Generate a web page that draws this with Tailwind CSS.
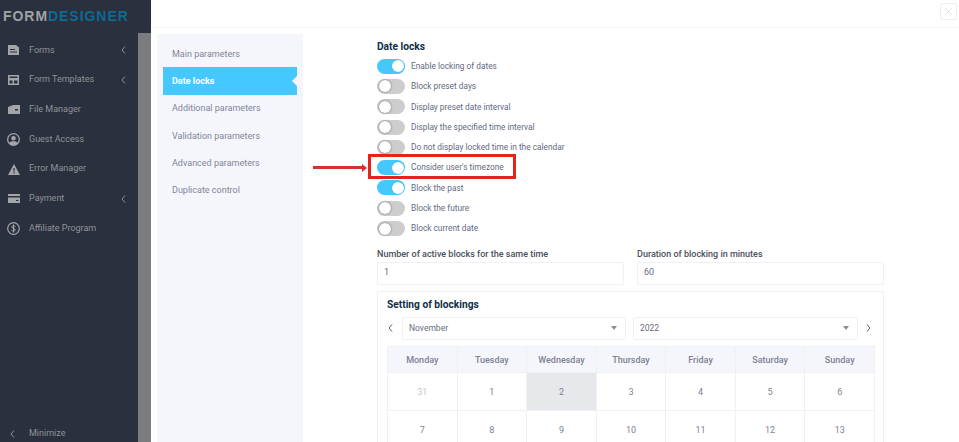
<!DOCTYPE html>
<html lang="en">
<head>
  <meta charset="UTF-8" />
  <title>Form Designer</title>
  <script src="https://cdn.jsdelivr.net/npm/@tailwindcss/browser@4"></script>
</head>
<body class="w-[959px] h-[442px] overflow-hidden bg-white font-['Roboto',sans-serif] text-[9px] flex">
  <!-- sidebar -->
  <aside class="w-[151px] h-[442px] shrink-0 flex flex-col bg-[#7b7c81]">
    <div class="h-[33px] bg-[#2a303d] pl-[3px] pt-[8px] font-['Liberation_Sans',sans-serif] font-bold text-[14px] leading-[16px] tracking-[0.950px]">
      <span class="text-[#a0a2a6]">FORM</span><span class="text-[#0c6a94]">DESIGNER</span>
    </div>
    <nav class="w-[138px] flex-1 bg-[#2a303d] text-[#90939a] flex flex-col">
      <div class="pt-[2.500px] flex-1 flex flex-col">
        <a class="h-[29.700px] flex items-center pl-[8px]">
          <svg class="w-[12px] h-[10px] mr-[9px]" viewBox="0 0 12 10" fill="#a3a5aa"><path d="M0 0h8l3 2.500V10H0zM2 4v1h5V4zM2 6.500v1h7v-1z" fill-rule="evenodd"/></svg>
          <span class="flex-1">Forms</span>
          <svg class="w-[5px] h-[8px] mr-[12px]" viewBox="0 0 5 8" fill="none" stroke="#90939a"><path d="M4 .5 1 4l3 3.500"/></svg>
        </a>
        <a class="h-[29.700px] flex items-center pl-[8px]">
          <svg class="w-[11px] h-[10px] mr-[10px]" viewBox="0 0 11 10" fill="#a3a5aa"><path d="M0 0h11v10H0zM1.500 3v5.500h3V5.500h-3V3zm0 0h8V1.500h-8zm4.500 2.500v3h3.500v-3z" fill-rule="evenodd"/></svg>
          <span class="flex-1">Form Templates</span>
          <svg class="w-[5px] h-[8px] mr-[12px]" viewBox="0 0 5 8" fill="none" stroke="#90939a"><path d="M4 .5 1 4l3 3.500"/></svg>
        </a>
        <a class="h-[29.700px] flex items-center pl-[8px]">
          <svg class="w-[12px] h-[9px] mr-[9px]" viewBox="0 0 12 9" fill="#a3a5aa"><path d="M0 2 5 0h7v9H0zM7 4v1.500h3V4z" fill-rule="evenodd"/></svg>
          <span>File Manager</span>
        </a>
        <a class="h-[29.700px] flex items-center pl-[7px]">
          <svg class="w-[13px] h-[13px] mr-[9px]" viewBox="0 0 13 13" fill="#a3a5aa"><path d="M6.500 0a6.500 6.500 0 1 0 0 13 6.500 6.500 0 0 0 0-13zm0 1.200a5.300 5.300 0 0 1 4.200 8.500C9.800 8.700 8.300 8.300 6.500 8.300s-3.300.4-4.200 1.400A5.300 5.300 0 0 1 6.500 1.200zm0 1.800a2.300 2.300 0 1 0 0 4.600 2.300 2.300 0 0 0 0-4.600z" fill-rule="evenodd"/></svg>
          <span>Guest Access</span>
        </a>
        <a class="h-[29.700px] flex items-center pl-[8px]">
          <svg class="w-[12px] h-[11px] mr-[9px]" viewBox="0 0 12 11" fill="#a3a5aa"><path d="M6 0l6 11H0zM5.400 4v3.500h1.200V4zm0 4.300v1.200h1.200V8.300z" fill-rule="evenodd"/></svg>
          <span>Error Manager</span>
        </a>
        <a class="h-[29.700px] flex items-center pl-[8px]">
          <svg class="w-[12px] h-[9px] mr-[9px]" viewBox="0 0 12 9" fill="#a3a5aa"><path d="M0 0h12v9H0zM0 2v1.500h12V2zM8 6v1h2.500V6z" fill-rule="evenodd"/></svg>
          <span class="flex-1">Payment</span>
          <svg class="w-[5px] h-[8px] mr-[12px]" viewBox="0 0 5 8" fill="none" stroke="#90939a"><path d="M4 .5 1 4l3 3.500"/></svg>
        </a>
        <a class="h-[29.700px] flex items-center pl-[7px]">
          <svg class="w-[13px] h-[13px] mr-[9px]" viewBox="0 0 13 13" fill="none" stroke="#a3a5aa"><circle cx="6.500" cy="6.500" r="5.800" stroke-width="1.200"/><path d="M8.500 4.600C8 3.700 5 3.400 4.700 5c-.2 1.700 3.800 1 3.600 3-.2 1.500-3.300 1.300-3.900.3M6.500 2.500v8"/></svg>
          <span>Affiliate Program</span>
        </a>
      </div>
      <div class="h-[17px] flex items-center pl-[10px]">
        <svg class="w-[5px] h-[8px] mr-[14px]" viewBox="0 0 5 8" fill="none" stroke="#90939a"><path d="M4 .5 1 4l3 3.500"/></svg>
        <span>Minimize</span>
      </div>
    </nav>
  </aside>

  <!-- modal -->
  <main class="flex-1 min-w-0 h-[442px] overflow-hidden flex flex-col bg-white">
    <header class="h-[28px] shrink-0 border-b border-[#f4f5f7] flex justify-end pt-[3px] pr-[2px]">
      <div class="w-[17px] h-[17px] rounded-[2px] border border-[#eceef1] flex items-center justify-center">
        <svg class="w-[9px] h-[9px]" viewBox="0 0 9 9" stroke="#e2e4e8"><path d="M1 1l7 7M8 1 1 8"/></svg>
      </div>
    </header>
    <div class="flex-1 flex pt-[6px] pl-[6px] min-h-0">
      <!-- tabs -->
      <div class="w-[146px] h-[408px] shrink-0 bg-[#f5f6fb] pt-[6px] pl-[6px] text-[#80859a] text-[9px]">
        <div class="h-[27px] pl-[9px] pt-[2px] flex items-center">Main parameters</div>
        <div class="relative w-[134px] h-[28px] pl-[9px] pt-[2px] flex items-center bg-[#45c8ff] text-white font-bold">
          Date locks
          <span class="absolute right-0 top-[9px] border-y-[5px] border-r-[5px] border-y-transparent border-r-[#f5f6fb]"></span>
        </div>
        <div class="h-[27.300px] pl-[9px] pt-[1px] flex items-center">Additional parameters</div>
        <div class="h-[27.300px] pl-[9px] pt-[1px] flex items-center">Validation parameters</div>
        <div class="h-[27.300px] pl-[9px] pt-[1px] flex items-center">Advanced parameters</div>
        <div class="h-[27.300px] pl-[9px] flex items-center">Duplicate control</div>
      </div>

      <!-- content -->
      <div class="w-[507px] ml-[74px] shrink-0">
        <h2 class="text-[#0e2f49] font-bold text-[10.200px] leading-[14px] mt-[6px] mb-[2px]">Date locks</h2>
        <div class="flex flex-col text-[#636a7f] text-[8.300px]">
          <label class="h-[20.300px] flex items-center gap-[6px]"><span class="w-[28px] h-[15px] rounded-full bg-[#45c8ff] flex justify-end items-center pr-[1.500px]"><span class="w-[12px] h-[12px] rounded-full bg-white shadow-[0_0_1px_#1d8fc4]"></span></span>Enable locking of dates</label>
          <label class="h-[20.300px] flex items-center gap-[6px]"><span class="w-[28px] h-[15px] rounded-full bg-[#cdcdcd] flex items-center pl-[1.500px]"><span class="w-[12px] h-[12px] rounded-full bg-white shadow-[0_0_2px_#555]"></span></span>Block preset days</label>
          <label class="h-[20.300px] flex items-center gap-[6px]"><span class="w-[28px] h-[15px] rounded-full bg-[#cdcdcd] flex items-center pl-[1.500px]"><span class="w-[12px] h-[12px] rounded-full bg-white shadow-[0_0_2px_#555]"></span></span>Display preset date interval</label>
          <label class="h-[20.300px] flex items-center gap-[6px]"><span class="w-[28px] h-[15px] rounded-full bg-[#cdcdcd] flex items-center pl-[1.500px]"><span class="w-[12px] h-[12px] rounded-full bg-white shadow-[0_0_2px_#555]"></span></span>Display the specified time interval</label>
          <label class="h-[20.300px] flex items-center gap-[6px]"><span class="w-[28px] h-[15px] rounded-full bg-[#cdcdcd] flex items-center pl-[1.500px]"><span class="w-[12px] h-[12px] rounded-full bg-white shadow-[0_0_2px_#555]"></span></span>Do not display locked time in the calendar</label>
          <label class="relative h-[20.300px] flex items-center gap-[6px]"><span class="w-[28px] h-[15px] rounded-full bg-[#45c8ff] flex justify-end items-center pr-[1.500px]"><span class="w-[12px] h-[12px] rounded-full bg-white shadow-[0_0_1px_#1d8fc4]"></span></span>Consider user's timezone
            <span class="absolute left-[-9px] top-[-3px] w-[148px] h-[25px] border-[3px] border-[#e3241c]"></span>
            <span class="absolute left-[-64px] top-[9px] w-[50px] h-[3px] bg-[#d8302a]"></span>
            <span class="absolute left-[-15px] top-[6.500px] border-y-[4px] border-l-[5px] border-y-transparent border-l-[#d8302a]"></span>
          </label>
          <label class="h-[20.300px] flex items-center gap-[6px]"><span class="w-[28px] h-[15px] rounded-full bg-[#45c8ff] flex justify-end items-center pr-[1.500px]"><span class="w-[12px] h-[12px] rounded-full bg-white shadow-[0_0_1px_#1d8fc4]"></span></span>Block the past</label>
          <label class="h-[20.300px] flex items-center gap-[6px]"><span class="w-[28px] h-[15px] rounded-full bg-[#cdcdcd] flex items-center pl-[1.500px]"><span class="w-[12px] h-[12px] rounded-full bg-white shadow-[0_0_2px_#555]"></span></span>Block the future</label>
          <label class="h-[20.300px] flex items-center gap-[6px]"><span class="w-[28px] h-[15px] rounded-full bg-[#cdcdcd] flex items-center pl-[1.500px]"><span class="w-[12px] h-[12px] rounded-full bg-white shadow-[0_0_2px_#555]"></span></span>Block current date</label>
        </div>

        <div class="grid grid-cols-[247px_247px] gap-x-[13px] mt-[8px] text-[#4a4f5c] text-[9px] font-medium">
          <div>
            <div class="h-[14px] leading-[14px] mb-[1px]">Number of active blocks for the same time</div>
            <div class="h-[23px] border border-[#f0f1f4] rounded-[2px] pl-[6px] flex items-center font-normal text-[#666c7e]">1</div>
          </div>
          <div>
            <div class="h-[14px] leading-[14px] mb-[1px]">Duration of blocking in minutes</div>
            <div class="h-[23px] border border-[#f0f1f4] rounded-[2px] pl-[6px] flex items-center font-normal text-[#666c7e]">60</div>
          </div>
        </div>

        <section class="mt-[6px] w-[507px] border border-[#f0f1f4] rounded-[2px] px-[9px] pt-[6px]">
          <h3 class="text-[#0e2f49] font-bold text-[10.200px] leading-[14px] mb-[5px]">Setting of blockings</h3>
          <div class="flex items-center h-[23px] text-[#666c7e] text-[8.500px]">
            <svg class="w-[5px] h-[8px] ml-[1px] mr-[9px]" viewBox="0 0 5 8" fill="none" stroke="#555b6b"><path d="M4 .5 1 4l3 3.500"/></svg>
            <div class="w-[224px] h-[23px] border border-[#f0f1f4] rounded-[2px] px-[6px] flex items-center justify-between">November<span class="border-x-[3.500px] border-t-[4px] border-x-transparent border-t-[#8a8e9a] mr-[2px]"></span></div>
            <div class="w-[225px] h-[23px] ml-[7px] border border-[#f0f1f4] rounded-[2px] px-[6px] flex items-center justify-between">2022<span class="border-x-[3.500px] border-t-[4px] border-x-transparent border-t-[#8a8e9a] mr-[2px]"></span></div>
            <svg class="w-[5px] h-[8px] ml-[8px]" viewBox="0 0 5 8" fill="none" stroke="#555b6b"><path d="M1 .5 4 4 1 7.500"/></svg>
          </div>
          <table class="mt-[6px] w-[488px] table-fixed border-collapse text-center text-[#7c8193] text-[9px]">
            <thead>
              <tr class="h-[26px] bg-[#f5f6fb] font-medium">
                <th class="border border-[#eef0f4] font-medium pt-[3px]">Monday</th>
                <th class="border border-[#eef0f4] font-medium pt-[3px]">Tuesday</th>
                <th class="border border-[#eef0f4] font-medium pt-[3px]">Wednesday</th>
                <th class="border border-[#eef0f4] font-medium pt-[3px]">Thursday</th>
                <th class="border border-[#eef0f4] font-medium pt-[3px]">Friday</th>
                <th class="border border-[#eef0f4] font-medium pt-[3px]">Saturday</th>
                <th class="border border-[#eef0f4] font-medium pt-[3px]">Sunday</th>
              </tr>
            </thead>
            <tbody>
              <tr class="h-[38.500px]">
                <td class="border border-[#f0f1f4] pt-[2px] text-[#c4c6cc]">31</td>
                <td class="border border-[#f0f1f4] pt-[2px]">1</td>
                <td class="border border-[#f0f1f4] pt-[2px] bg-[#e6e8ec]">2</td>
                <td class="border border-[#f0f1f4] pt-[2px]">3</td>
                <td class="border border-[#f0f1f4] pt-[2px]">4</td>
                <td class="border border-[#f0f1f4] pt-[2px]">5</td>
                <td class="border border-[#f0f1f4] pt-[2px]">6</td>
              </tr>
              <tr class="h-[38.500px]">
                <td class="border border-[#f0f1f4] pt-[2px]">7</td>
                <td class="border border-[#f0f1f4] pt-[2px]">8</td>
                <td class="border border-[#f0f1f4] pt-[2px]">9</td>
                <td class="border border-[#f0f1f4] pt-[2px]">10</td>
                <td class="border border-[#f0f1f4] pt-[2px]">11</td>
                <td class="border border-[#f0f1f4] pt-[2px]">12</td>
                <td class="border border-[#f0f1f4] pt-[2px]">13</td>
              </tr>
            </tbody>
          </table>
        </section>
      </div>
    </div>
  </main>
</body>
</html>
